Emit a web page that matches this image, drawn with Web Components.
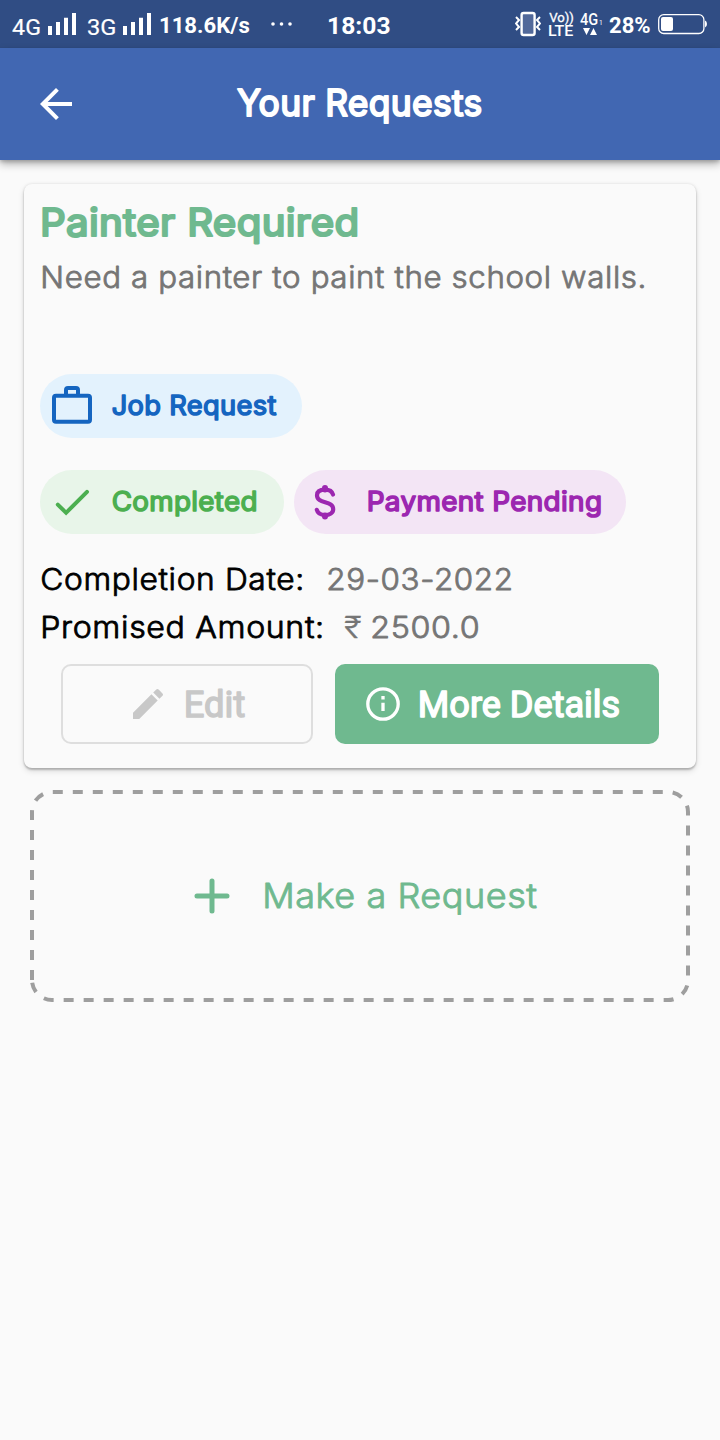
<!DOCTYPE html>
<html lang="en"><head><meta charset="utf-8"><title>Your Requests</title>
<style>html,body{margin:0;background:#fafafa}body{width:720px;min-height:1440px;font-family:Inter,"Open Sans",sans-serif}</style></head>
<body><requests-page></requests-page>
<script>
const define=(name,html,setup)=>customElements.define(name,class extends HTMLElement{
  connectedCallback(){ if(this.shadowRoot) return;
    const t=document.createElement('template'); t.innerHTML=html;
    this.attachShadow({mode:'open'}).append(t.content.cloneNode(true));
    if(setup) setup(this,this.shadowRoot);
  }});

// A line of rounded text fitted to width `w`, in a strip `h` high with its baseline at `b`.
const ctx=document.createElement('canvas').getContext('2d');
define('fit-text',`<style>:host{display:block;flex:none}svg{display:block;overflow:visible}</style><svg><text fill="currentColor" stroke="currentColor" stroke-linejoin="round" stroke-linecap="round"></text></svg>`,(el,root)=>{
  const a=(n,d)=>el.getAttribute(n)??d;
  const w=+a('w'),h=+a('h'),b=+a('b'),size=+a('size'),s=+a('stroke',0),ls=a('ls','0')+'px',weight=a('weight','400'),family=a('family','Inter');
  const text=a('text'),svg=root.querySelector('svg'),t=root.querySelector('text');
  ctx.font=`${weight} ${size}px ${family}, sans-serif`;
  ctx.letterSpacing=ls;
  const m=ctx.measureText(text), ink=m.actualBoundingBoxLeft+m.actualBoundingBoxRight;
  const k=(w-s)/ink;
  svg.setAttribute('width',w); svg.setAttribute('height',h);
  t.textContent=text;
  t.style.font=ctx.font; t.style.letterSpacing=ls; t.setAttribute('stroke-width',s);
  if(!s) t.setAttribute('stroke','none');
  t.setAttribute('transform',`translate(${s/2+m.actualBoundingBoxLeft*k} ${b}) scale(${k} 1)`);
});

define('signal-bars',`<style>:host{display:block;flex:none;height:48px}svg{display:block}</style>
<svg width="28" height="48" fill="#fff"><path d="M0 26h4v9H0zM8 22h4v13H8zM16 17.7h4V35h-4zM24 13h4v22h-4z"/></svg>`);

define('status-bar',`<style>:host{display:flex;height:48px;background:#304d84;color:#fff;box-sizing:border-box;padding:0 12px;justify-content:space-between}
div{display:flex;align-items:flex-start}svg{display:block;flex:none}.l{gap:0}.stack{display:block}</style>
<div class="l">
<fit-text text="4G" w="28" h="48" b="34.6" size="22" family="Roboto" stroke=".2"></fit-text>
<signal-bars style="margin-left:8px"></signal-bars>
<fit-text style="margin-left:12px" text="3G" w="27.5" h="48" b="34.6" size="22" family="Roboto" stroke=".2"></fit-text>
<signal-bars style="margin-left:7.5px"></signal-bars>
<fit-text style="margin-left:9px" text="118.6K/s" w="89.5" h="48" b="33" size="22" weight="700" family="Roboto"></fit-text>
<svg style="margin-left:20px" width="24" height="48" fill="#fff"><circle cx="3" cy="24" r="1.8"/><circle cx="11.5" cy="24" r="1.8"/><circle cx="20" cy="24" r="1.8"/></svg>
<fit-text style="margin-left:35.5px" text="18:03" w="60.5" h="48" b="34" size="24.5" weight="700" family="Roboto"></fit-text>
</div>
<div>
<svg width="26" height="48" fill="none" stroke="#fff"><rect x="6.6" y="13" width="13" height="22" rx="2" stroke-width="2.4" fill="#52699a"/><path d="M1 17l3 3-3 3.5L4 27l-3 3M25 17l-3 3 3 3.5-3 3.5 3 3" stroke-width="2"/></svg>
<div class="stack" style="margin-left:8px"><fit-text text="Vo))" w="24.5" h="22" b="21.5" size="13" family="Roboto" stroke=".3"></fit-text><fit-text text="LTE" w="25" h="26" b="14" size="15" weight="500" family="Roboto"></fit-text></div>
<div style="margin-left:6px;width:22px"><svg width="22" height="48" fill="#fff"><path d="M3 28h7l-3.5 7zM10 35l3.5-7 3.5 7z"/></svg><fit-text style="margin-left:-22px" text="4G" w="18" h="48" b="25" size="16.5" weight="500" family="Roboto"></fit-text><fit-text style="margin-left:1px" text="1" w="2.5" h="48" b="25" size="8" family="Roboto"></fit-text></div>
<fit-text style="margin-left:7.5px" text="28%" w="41" h="48" b="33.3" size="22.5" weight="700" family="Roboto"></fit-text>
<svg style="margin:0 0 0 8px" width="49" height="48"><rect x=".7" y="14.7" width="45.2" height="18.8" rx="5" fill="none" stroke="#fff" stroke-width="1.3"/><rect x="3" y="17" width="12" height="14" rx="2" fill="#fff"/><path d="M47 20.5q2 .8 2 3.5t-2 3.5z" fill="#fff"/></svg>
</div>`,(el)=>{el.style.paddingRight='13px'});

define('app-header',`<style>:host{display:flex;height:112px;background:#4167b2;color:#fff;box-shadow:0 4px 8px rgba(0,0,0,.3),0 2px 3px rgba(0,0,0,.15);position:relative;align-items:center;padding-left:32px;box-sizing:border-box}svg{display:block}</style>
<svg width="48" height="48" viewBox="0 0 24 24" fill="#fff"><path d="M20 11H7.83l5.59-5.59L12 4l-8 8 8 8 1.41-1.41L7.83 13H20v-2z"/></svg>
<fit-text style="margin-left:155.5px" text="Your Requests" w="246" h="112" b="68.3" size="36.5" weight="400" ls=".3" stroke="2"></fit-text>`);

define('status-chip',`<style>:host{display:flex;align-items:flex-start;height:64px;border-radius:32px;box-sizing:border-box;flex:none}</style><slot></slot>`);

define('action-button',`<style>:host{display:flex;align-items:flex-start;height:80px;border-radius:10px;box-sizing:border-box;flex:none}</style><slot></slot>`);

define('request-card',`<style>:host{display:block;box-sizing:border-box;width:672px;height:584px;margin:24px 24px 0;padding-left:16px;border-radius:8px;background:#fafafa;box-shadow:0 2px 2px rgba(0,0,0,.2),0 3px 6px rgba(0,0,0,.13),0 0 3px rgba(0,0,0,.1)}
.row{display:flex;align-items:flex-start}svg{display:block;flex:none}.job{width:262px;background:#e3f2fd;color:#1565c0}.done{width:244px;background:#e8f5e9;color:#4caf50}.pay{width:332px;background:#f3e5f5;color:#9c27b0;margin-left:10px}
.grey{color:#757575}.edit{width:252px;border:2px solid #dedede;color:#c8c8c8;margin-left:21px}.more{width:324px;background:#6fb98f;color:#fff;margin-left:21.5px}</style>
<fit-text style="color:#6fb98f;margin-left:2px" text="Painter Required" w="316" h="72" b="52" size="38" weight="400" ls=".3" stroke="2.2"></fit-text>
<fit-text class="grey" style="margin-left:1.5px" text="Need a painter to paint the school walls." w="602.5" h="118" b="32.1" size="30" weight="300" ls=".6" stroke=".8"></fit-text>
<status-chip class="job"><svg style="margin:12px 0 0 12px" width="40" height="40" fill="none" stroke="currentColor" stroke-width="4"><rect x="2" y="9.8" width="36" height="26" rx="2"/><path d="M14 9V4q0-2 2-2h8q2 0 2 2v5"/></svg><fit-text style="margin-left:20px" text="Job Request" w="165.5" h="64" b="40.8" size="26.5" weight="400" ls=".3" stroke="1.5"></fit-text></status-chip>
<div class="row" style="margin-top:32px"><status-chip class="done"><svg style="margin:12px 0 0 12px" width="40" height="40" fill="none" stroke="currentColor" stroke-width="4" stroke-linecap="round" stroke-linejoin="miter"><path d="M5.8 22.6l8.3 8.2L35 9.8"/></svg><fit-text style="margin-left:20px" text="Completed" w="145" h="64" b="40.8" size="26.5" weight="400" ls=".3" stroke="1.5"></fit-text></status-chip>
<status-chip class="pay"><svg style="margin:12px 0 0 11px" width="40" height="40" fill="none" stroke="currentColor" stroke-width="4.2" stroke-linecap="round"><path d="M28 12.5C27 9 24 7.6 20 7.6c-5 0-8 2-8 5.6 0 9.5 16.2 4.6 16.2 14 0 3.7-3.6 5.8-8.2 5.8-4.7 0-7.4-2-8.2-5.2"/><path d="M20 6v1.4M20 33.6v1" stroke-width="6"/></svg><fit-text style="margin-left:22.5px" text="Payment Pending" w="233.5" h="64" b="40.8" size="26.5" weight="400" ls=".3" stroke="1.5"></fit-text></status-chip></div>
<div class="row" style="margin-top:24px"><fit-text style="color:#000;margin-left:1px" text="Completion Date:" w="261" h="48" b="31.6" size="30" weight="300" ls=".6" stroke=".8"></fit-text><fit-text class="grey" style="margin-left:25.5px" text="29-03-2022" w="184" h="48" b="31.6" size="30" weight="300" ls=".6" stroke=".8"></fit-text></div>
<div class="row"><fit-text style="color:#000;margin-left:2px" text="Promised Amount:" w="280" h="58" b="31.6" size="30" weight="300" ls=".6" stroke=".8"></fit-text><fit-text class="grey" style="margin-left:22px" text="₹" w="17" h="58" b="31.6" size="30" weight="300" stroke=".4"></fit-text><fit-text class="grey" style="margin-left:11px" text="2500.0" w="106.5" h="58" b="31.6" size="30" weight="300" ls=".6" stroke=".8"></fit-text></div>
<div class="row"><action-button class="edit"><svg style="margin:18px 0 0 65px" width="40" height="40" viewBox="0 0 24 24" fill="currentColor"><path d="M3 17.25V21h3.75L17.81 9.94l-3.75-3.75L3 17.25zM20.71 7.04a1 1 0 0 0 0-1.41l-2.34-2.34a1 1 0 0 0-1.41 0l-1.83 1.83 3.75 3.75 1.83-1.83z"/></svg><fit-text style="margin-left:17.5px" text="Edit" w="59" h="76" b="51" size="37" weight="400" family="Roboto" stroke="1.4"></fit-text></action-button>
<action-button class="more"><svg style="margin:20px 0 0 28px" width="40" height="40" fill="none" stroke="currentColor" stroke-width="3.3"><circle cx="20" cy="20" r="15.2"/><path d="M20 18.8v8.2M20 12v3.4"/></svg><fit-text style="margin-left:17.5px" text="More Details" w="200" h="80" b="53" size="37" weight="400" family="Roboto" stroke="1.5"></fit-text></action-button></div>`);

define('make-request',`<style>:host{display:grid;width:660px;height:212px;margin:22px 30px 0;color:#6fb98f}svg{display:block}.border,.in{grid-area:1/1}.in{display:flex;align-items:flex-start}</style>
<svg class="border" width="660" height="212" fill="none" stroke="#9e9e9e" stroke-width="4" stroke-dasharray="10 10"><path d="M2 190V22A20 20 0 0 1 22 2H638A20 20 0 0 1 658 22V190A20 20 0 0 1 638 210H22A20 20 0 0 1 2 190"/></svg>
<div class="in"><svg style="margin:86px 0 0 162px" width="40" height="40" stroke="currentColor" stroke-width="5" stroke-linecap="round"><path d="M20 5v30M5 20h30"/></svg><fit-text style="margin-left:32.5px" text="Make a Request" w="272.5" h="212" b="118" size="34" weight="300" ls=".5" stroke=".9"></fit-text></div>`);

define('requests-page',`<style>:host{display:block;width:720px;min-height:1440px;background:#fafafa}</style><status-bar></status-bar><app-header></app-header><request-card></request-card><make-request></make-request>`);
</script></body></html>
